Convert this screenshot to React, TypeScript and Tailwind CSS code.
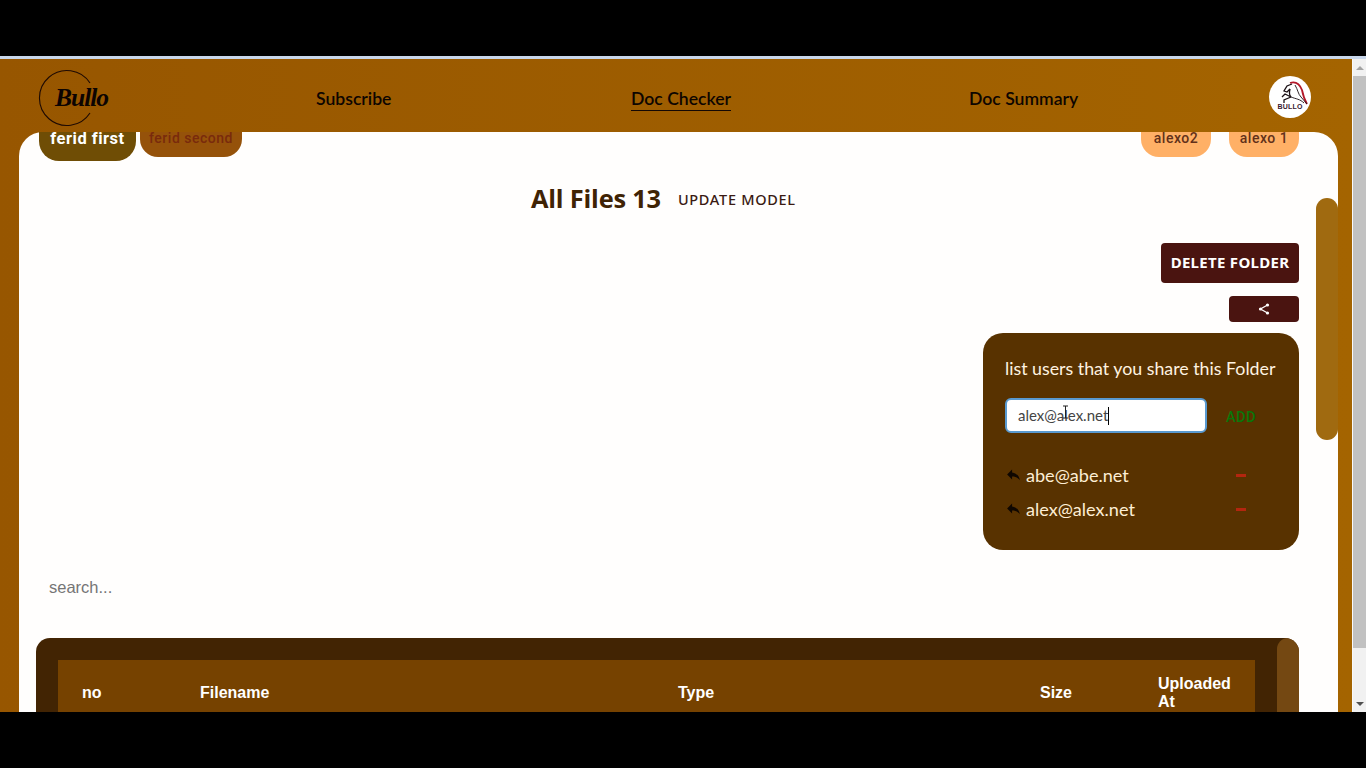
import React from "react";
import { MdReply } from "react-icons/md";

function Logo() {
  return (
    <div className="relative w-[70px] h-[56px] shrink-0">
      <svg width="58" height="58" viewBox="0 0 58 58" className="absolute left-0 top-0">
        <path d="M52 14 A27.5 27.5 0 1 0 52 44" fill="none" stroke="#1e0a03" strokeWidth="1.1" />
      </svg>
      <span className="absolute left-[17px] top-[13px] text-[25.5px] leading-[32px] font-bold italic text-[#0c0402] tracking-[-1px] [font-family:'Liberation_Serif',serif]">
        Bullo
      </span>
    </div>
  );
}

function Horse() {
  return (
    <div className="relative w-[42px] h-[42px] rounded-full bg-white shrink-0">
      <svg width="42" height="42" viewBox="0 0 42 42" className="absolute inset-0">
        <path d="M21 7 C27 5 31 9 33 14 C34 19 35 23 38 28" fill="none" stroke="#b3182a" strokeWidth="1.8" />
        <path d="M23 8 L18 10 L15 15 L18 16 L21 13" fill="none" stroke="#1a1014" strokeWidth="1.3" />
        <path d="M26 9 C29 14 29 18 32 21 L38 28" fill="none" stroke="#1a1014" strokeWidth="0.9" />
        <path d="M21 13 C20 17 20 19 22 21 L16 18 L13 21" fill="none" stroke="#1a1014" strokeWidth="1.3" />
        <path d="M22 21 L15 24 L15 27" fill="none" stroke="#1a1014" strokeWidth="1.3" />
        <path d="M22 21 C27 23 31 23 35 27" fill="none" stroke="#1a1014" strokeWidth="0.9" />
      </svg>
      <span className="absolute left-0 right-0 top-[27px] text-center text-[7px] tracking-[0.2px] leading-[8px] font-bold text-[#3a2030] [font-family:'Liberation_Sans',sans-serif]">
        BULLO
      </span>
    </div>
  );
}

function ShareIcon() {
  return (
    <svg width="12" height="12" viewBox="0 0 12 12">
      <path d="M9.5 2 L2.5 6 L9.5 10" fill="none" stroke="#fff" strokeWidth="1.3" />
      <circle cx="9.5" cy="2" r="1.6" fill="#fff" />
      <circle cx="2.5" cy="6" r="1.6" fill="#fff" />
      <circle cx="9.5" cy="10" r="1.6" fill="#fff" />
    </svg>
  );
}

function UserRow({ email }: { email: string }) {
  return (
    <div className="flex items-center h-[34px]">
      <MdReply className="text-[#0f0701] w-[17px] h-[17px] -ml-[1px] -mt-[3px] shrink-0" />
      <span className="ml-[4px] w-[210px] text-[18.1px] text-[#fdeed5] [font-family:Lato,sans-serif]">{email}</span>
      <span className="w-[10px] h-[3px] bg-[#b3260f] -mt-[1px]" />
    </div>
  );
}

function Scrollbar() {
  return (
    <div className="w-[14px] shrink-0 bg-[#f1f1f1] border-l border-[#fafafa] flex flex-col items-center">
      <div className="h-[17px] flex items-center justify-center">
        <div className="w-0 h-0 border-x-[4px] border-x-transparent border-b-[4px] border-b-[#a3a3a3]" />
      </div>
      <div className="w-full h-[572px] bg-[#c1c1c1]" />
      <div className="flex-1 flex items-end justify-center pb-[6px]">
        <div className="w-0 h-0 border-x-[4px] border-x-transparent border-t-[4px] border-t-[#505050]" />
      </div>
    </div>
  );
}

export default function App() {
  return (
    <div className="h-screen w-full flex flex-col bg-black overflow-hidden">
      <div className="h-[56px] shrink-0 bg-black" />
      <div className="h-[3px] shrink-0 bg-[#c8d6ea]" />
      <div className="h-[653px] shrink-0 flex overflow-hidden">
        <div className="flex-1 min-w-0 flex flex-col bg-linear-to-r from-[#975600] to-[#a46400]">
          <header className="h-[73px] shrink-0 flex items-start pl-[38px] relative">
            <div className="mt-[10px]"><Logo /></div>
            <nav className="absolute inset-0 text-[17.6px] font-semibold text-[#0d0500] [font-family:Lato,sans-serif]">
              <span className="absolute left-[316px] top-[28px] leading-[23px]">Subscribe</span>
              <span className="absolute left-[631px] top-[28px] leading-[23px] border-b border-[#140804]">Doc Checker</span>
              <span className="absolute left-[969px] top-[28px] leading-[23px]">Doc Summary</span>
            </nav>
            <div className="absolute left-[1269px] top-[17px]"><Horse /></div>
          </header>

          <main className="relative flex-1 min-h-0 ml-[19px] mr-[14px] bg-[#fffefd] rounded-t-[24px] flex flex-col">
            <div className="h-[29px] shrink-0 flex items-start pl-[20px] pr-[39px] [font-family:Roboto,sans-serif]">
              <div className="w-[97px] h-[29px] bg-[#6f4d05] rounded-b-[20px] text-white font-bold text-[16.5px] tracking-[0.5px] text-center leading-[13px]">
                ferid first
              </div>
              <div className="ml-[4px] w-[102px] h-[25px] bg-[#95520a] rounded-b-[18px] text-[#792a0c] font-medium text-[14px] tracking-[0.5px] text-center leading-[13px]">
                ferid second
              </div>
              <div className="ml-auto w-[70px] h-[25px] bg-[#ffb066] rounded-b-[18px] text-[#62301a] font-medium text-[14px] tracking-[0.5px] text-center leading-[13px]">
                alexo2
              </div>
              <div className="ml-[18px] w-[70px] h-[25px] bg-[#ffb066] rounded-b-[18px] text-[#62301a] font-medium text-[14px] tracking-[0.5px] text-center leading-[13px]">
                alexo 1
              </div>
            </div>

            <div className="h-[34px] mt-[21px] shrink-0 flex items-center pl-[512px]">
              <span className="text-[25.4px] font-bold text-[#3f2304] [font-family:'Open_Sans',sans-serif] tracking-[-0.2px] -mt-[1px]">All Files 13</span>
              <span className="ml-[17px] text-[14.5px] font-medium tracking-[0.7px] text-[#3a1a12] [font-family:'Noto_Sans',sans-serif] mt-[1px]">UPDATE MODEL</span>
            </div>

            <div className="mt-[27px] shrink-0 pr-[39px] flex flex-col items-end">
              <div className="w-[138px] h-[40px] bg-[#4a1410] rounded-[4px] flex items-center justify-center text-white font-bold text-[15px] tracking-[0.3px] pb-[1px] [font-family:'Noto_Sans',sans-serif]">
                DELETE FOLDER
              </div>
              <div className="mt-[13px] w-[70px] h-[26px] bg-[#4a1410] rounded-[4px] flex items-center justify-center">
                <ShareIcon />
              </div>
              <div className="mt-[11px] w-[316px] h-[217px] bg-[#583200] rounded-[20px] pl-[22px] pt-[23px]">
                <div className="text-[17.8px] leading-[24px] text-[#fff3e0] [font-family:Lato,sans-serif] whitespace-nowrap">
                  list users that you share this Folder
                </div>
                <div className="mt-[18px] flex items-center">
                  <div className="relative w-[202px] h-[35px] bg-white border-2 border-[#5a9ad0] rounded-[6px] pl-[11px] flex items-center text-[15px] text-[#444] [font-family:Lato,sans-serif]">
                    alex@alex.net
                    <span className="w-px h-[18px] bg-black" />
                    <svg width="7" height="14" viewBox="0 0 7 14" className="absolute left-[55px] top-[5px]">
                      <path d="M1 1 H6 M3.5 1 V13 M1 13 H6" stroke="#222" strokeWidth="1" fill="none" />
                    </svg>
                  </div>
                  <span className="ml-[19px] mt-[3px] text-[14.7px] font-medium text-[#0a760a] tracking-[0.3px] [font-family:Roboto,sans-serif]">ADD</span>
                </div>
                <div className="mt-[26px] ml-[1px]">
                  <UserRow email="abe@abe.net" />
                  <UserRow email="alex@alex.net" />
                </div>
              </div>
            </div>

            <input
              placeholder="search..."
              className="mt-[25px] ml-[30px] w-[300px] h-[24px] shrink-0 outline-none bg-transparent text-[16.5px] placeholder:text-[#757575] [font-family:'Liberation_Sans',sans-serif]"
            />

            <div className="mt-[39px] ml-[17px] w-[1263px] h-[200px] shrink-0 relative bg-[#422403] rounded-t-[14px] pl-[22px] pt-[22px] overflow-hidden">
              <div className="w-[1197px] h-[65px] bg-[#764200] pl-[24px] grid grid-cols-[118px_478px_362px_118px_73px] items-center text-white font-bold text-[16px] leading-[18px] [font-family:'Liberation_Sans',sans-serif]">
                <div>no</div>
                <div>Filename</div>
                <div>Type</div>
                <div>Size</div>
                <div>Uploaded At</div>
              </div>
              <div className="absolute right-0 top-0 w-[22px] h-full bg-[#744812] rounded-[11px]" />
            </div>

            <div className="absolute right-0 top-[66px] w-[22px] h-[242px] rounded-[11px] bg-[#a06a10]" />
          </main>
        </div>
        <Scrollbar />
      </div>
      <div className="flex-1 bg-black" />
    </div>
  );
}
